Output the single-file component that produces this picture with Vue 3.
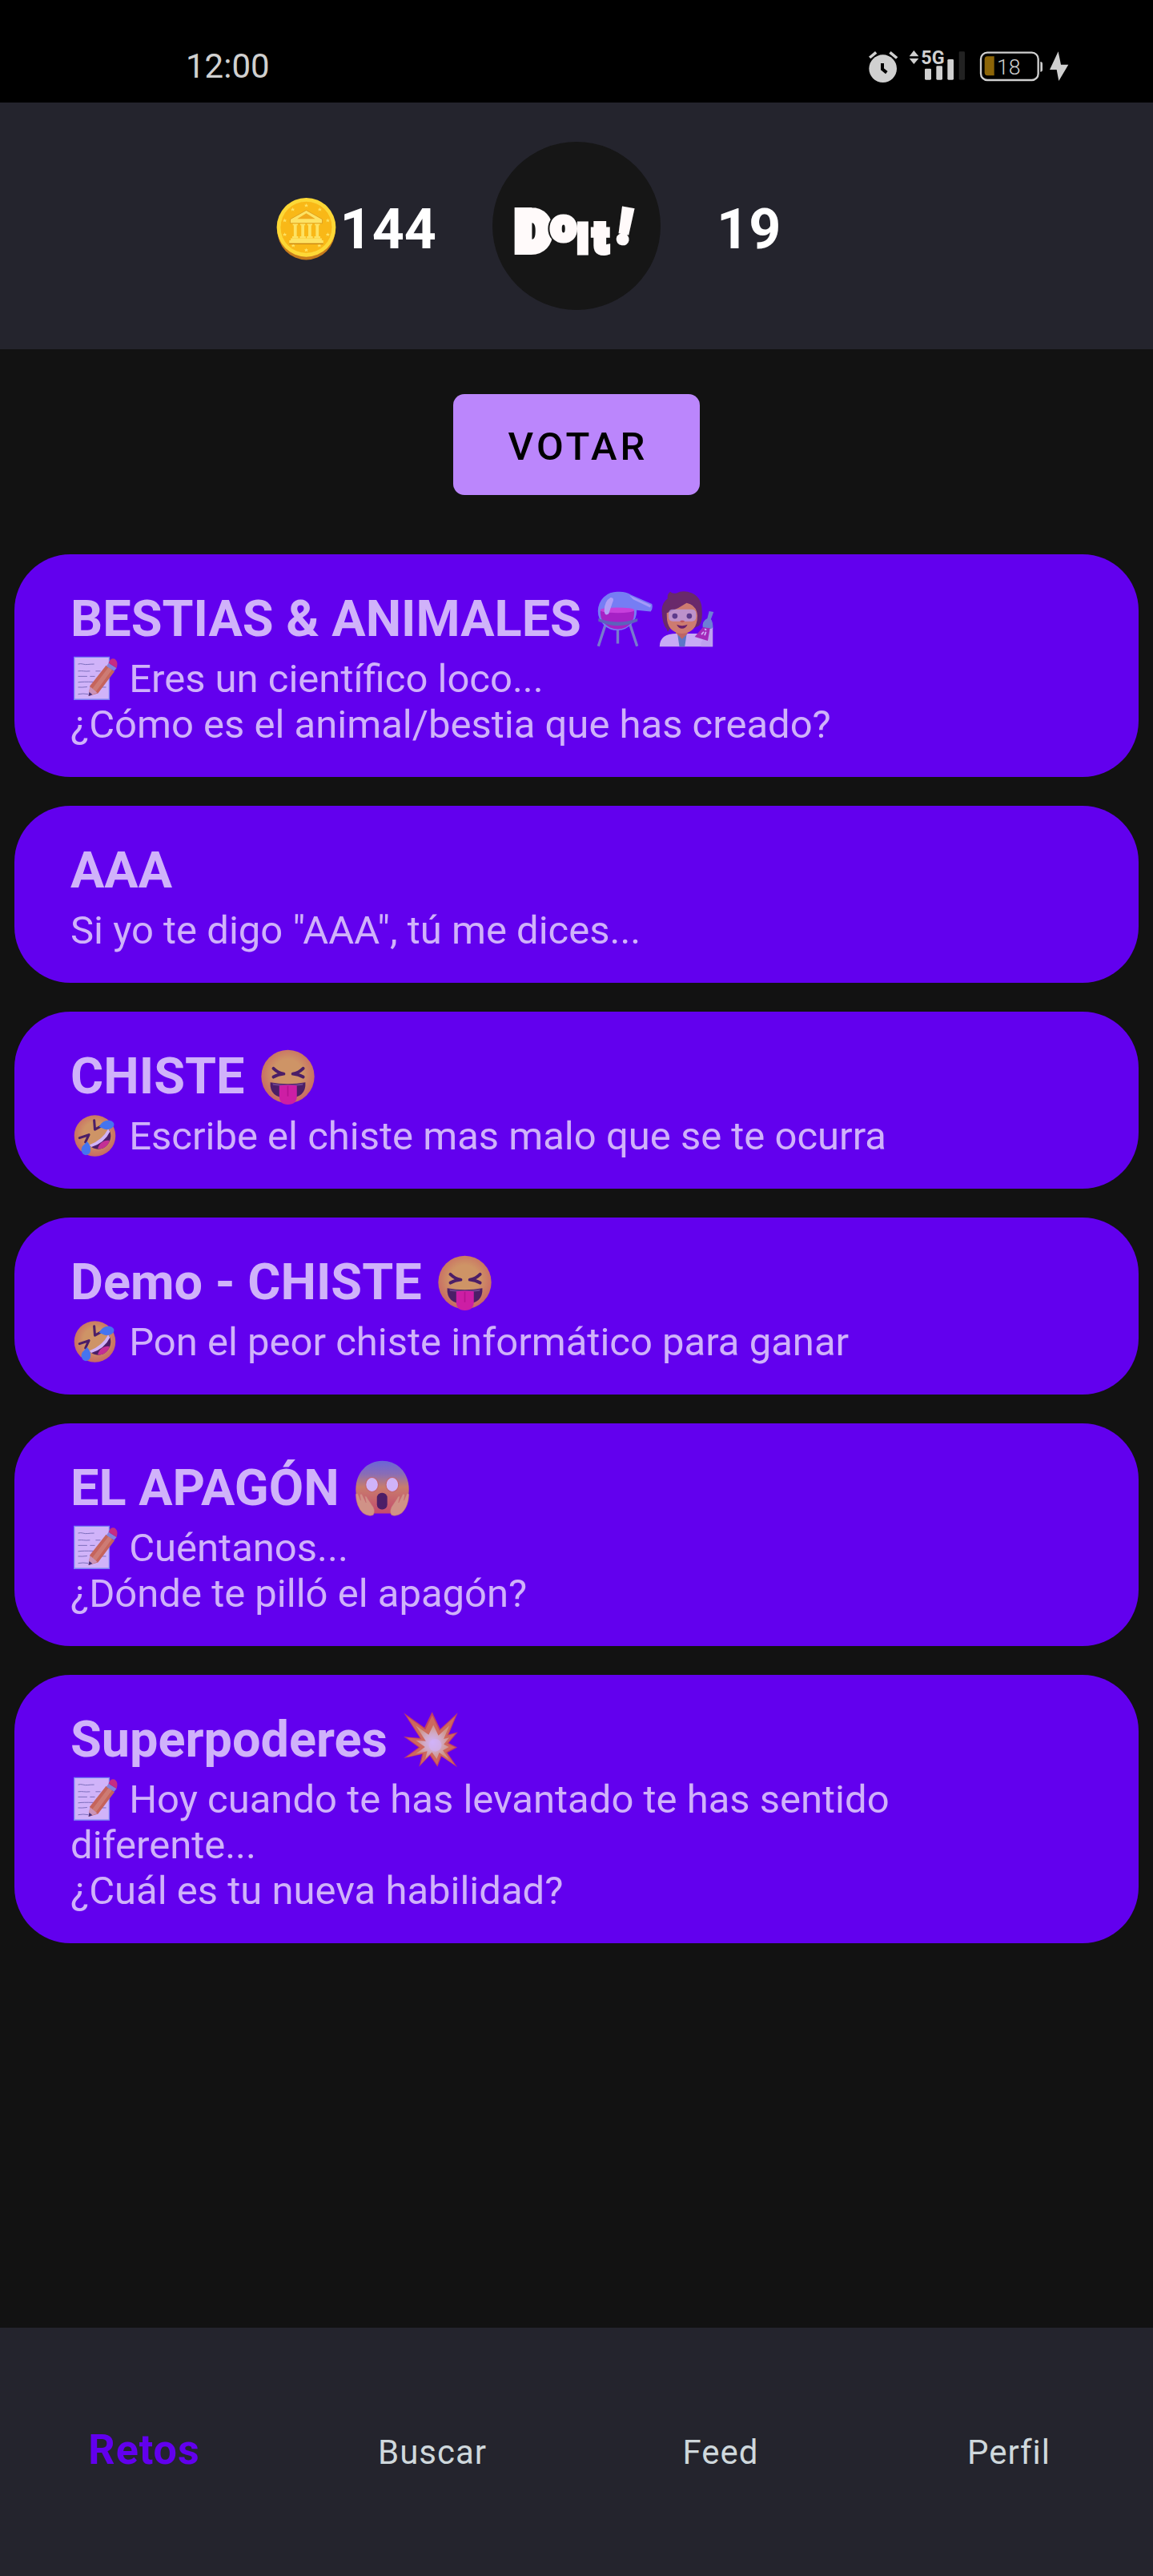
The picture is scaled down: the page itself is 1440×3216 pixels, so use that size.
<script setup>
import { ref } from 'vue'

const coins = 144
const level = 19

const challenges = [
  {
    title: 'BESTIAS & ANIMALES',
    icons: ['alembic', 'scientist'],
    lead: 'memo',
    lines: ['Eres un científico loco...', '¿Cómo es el animal/bestia que has creado?'],
  },
  { title: 'AAA', icons: [], lead: '', lines: ['Si yo te digo "AAA", tú me dices...'] },
  { title: 'CHISTE', icons: ['tongue'], lead: 'rofl', lines: ['Escribe el chiste mas malo que se te ocurra'] },
  { title: 'Demo - CHISTE', icons: ['tongue'], lead: 'rofl', lines: ['Pon el peor chiste informático para ganar'] },
  { title: 'EL APAGÓN', icons: ['scream'], lead: 'memo', lines: ['Cuéntanos...', '¿Dónde te pilló el apagón?'] },
  {
    title: 'Superpoderes',
    icons: ['boom'],
    lead: 'memo',
    lines: ['Hoy cuando te has levantado te has sentido diferente...', '¿Cuál es tu nueva habilidad?'],
  },
]

const tabs = ['Retos', 'Buscar', 'Feed', 'Perfil']
const active = ref('Retos')
</script>

<template>
  <div class="screen">
    <svg class="sprite" aria-hidden="true">
      <defs>
        <radialGradient id="skin" cx="50%" cy="45%" r="55%">
          <stop offset="0.5" stop-color="#fdd32d" />
          <stop offset="1" stop-color="#f3952a" />
        </radialGradient>
        <linearGradient id="fear" x1="0" y1="0" x2="0" y2="1">
          <stop offset="0" stop-color="#6f8fd0" />
          <stop offset="0.25" stop-color="#9a9ca0" />
          <stop offset="0.5" stop-color="#f3b236" />
          <stop offset="1" stop-color="#ee6a38" />
        </linearGradient>
        <radialGradient id="glow">
          <stop offset="0" stop-color="#ffffff" />
          <stop offset="0.5" stop-color="#fff3b8" />
          <stop offset="1" stop-color="#ffd45a" />
        </radialGradient>
        <path id="star" d="M0-4 1-1 4-1 2 1 3 4 0 2-3 4-2 1-4-1-1-1Z" />
        <path
          id="burst"
          d="M3 4 49 37 66 2 84 40 123 4 103 52 123 47 103 71 122 81 100 93 122 125 87 101 78 124 61 99 37 124 44 96 3 105 36 81 3 57 39 60Z"
        />
      </defs>

      <symbol id="e-coin" viewBox="-4 0 136 128">
        <ellipse cx="64" cy="67" rx="58" ry="60" fill="#c77b1c" />
        <circle cx="64" cy="62" r="59" fill="#fdd835" />
        <circle cx="64" cy="62" r="52" fill="#f9b817" stroke="#fbe04a" stroke-width="1" />
        <g fill="#fde263">
          <use href="#star" x="64" y="18" /><use href="#star" x="37" y="26" /><use href="#star" x="91" y="26" />
          <use href="#star" x="21" y="48" /><use href="#star" x="107" y="48" /><use href="#star" x="21" y="76" />
          <use href="#star" x="107" y="76" /><use href="#star" x="38" y="98" /><use href="#star" x="90" y="98" />
          <use href="#star" x="64" y="107" />
        </g>
        <path d="M64 28 96 46v8H32v-8Z" fill="#fde263" stroke="#d08a14" stroke-width="1" />
        <path d="M64 34 82 45H46Z" fill="#f0a91c" />
        <path
          d="M37 55h10v3h-2v22h3v4H36v-4h3V58h-2ZM52 55h10v3h-2v22h3v4H51v-4h3V58h-2ZM66 55h10v3h-2v22h3v4H65v-4h3V58h-2ZM81 55h10v3h-2v22h3v4H80v-4h3V58h-2Z"
          fill="#fde263"
        />
        <path d="M33 84h62v4h3v6H30v-6h3Z" fill="#fde263" />
        <path d="M30 94h68v2H30Z" fill="#c98512" />
      </symbol>

      <symbol id="e-memo" viewBox="-4 0 136 128">
        <path d="M5 3h100v121H5Z" fill="#fff" stroke="#7fb4f5" stroke-width="3" />
        <g stroke="#78909c" stroke-width="2" fill="none">
          <path d="M16 23q8-2 14 0t14 1 18-1M16 43q10-1 16 0t18 0M66 43h14M16 58h26M50 58h14M16 75q14-2 44-1M16 89q10 1 26-1M82 89h14M16 109q14-3 30 0" />
        </g>
        <path d="M96 27 120 44 73 106 46 114 50 85Z" fill="#ef8f1d" />
        <path d="M103 32 113 39 66 103 56 94Z" fill="#fbb041" />
        <path d="M50 87 71 105 46 114Z" fill="#f7d3a5" />
        <path d="M48 103 57 110 46 114Z" fill="#37474f" />
        <path d="M97 29 103 20 126 34 119 43Z" fill="#90b9d4" />
        <path d="M103 20Q108 4 120 8 132 16 126 34Z" fill="#ef4056" />
      </symbol>

      <symbol id="e-rofl" viewBox="-4 0 136 128">
        <circle cx="64" cy="64" r="59" fill="url(#skin)" />
        <path d="M104 46Q88 82 50 92C62 106 88 106 101 88 111 74 112 58 104 46Z" fill="#422b2f" />
        <path d="M72 101C76 84 92 74 106 78 101 94 88 102 72 101Z" fill="#ee4270" />
        <path d="M102 44Q86 76 48 90L54 96Q92 84 107 52Z" fill="#fff" />
        <g fill="none" stroke="#422b2f" stroke-width="7" stroke-linecap="round" stroke-linejoin="round">
          <path d="M62 20 64 46 84 35M20 70 47 61 37 82" />
        </g>
        <path d="M76 38Q86 18 106 20 122 24 118 36 110 48 92 45Z" fill="#3aa6f2" />
        <path d="M42 80Q56 96 50 112 42 124 30 116 22 106 28 94Z" fill="#3aa6f2" />
      </symbol>

      <symbol id="e-tongue" viewBox="-4 0 136 128">
        <circle cx="64" cy="64" r="59" fill="url(#skin)" />
        <g fill="none" stroke="#422b2f" stroke-width="7" stroke-linecap="round" stroke-linejoin="round">
          <path d="M32 46Q42 56 55 58 42 59 32 65M98 46Q88 56 75 58 88 59 98 65" />
        </g>
        <path d="M25 77Q64 84 103 77 105 112 64 112 23 112 25 77Z" fill="#422b2f" />
        <path d="M30 79Q64 85 98 79L97 83Q64 88 31 83Z" fill="#fff" opacity="0.25" />
        <path d="M45 84Q64 81 84 84V107Q84 126 64 126 45 126 45 107Z" fill="#fb2c85" />
        <path d="M64 85V108" stroke="#d81b6a" stroke-width="3" />
      </symbol>

      <symbol id="e-scream" viewBox="-4 0 136 128">
        <path d="M64 3C98 3 123 30 123 66 123 96 105 120 82 120H46C23 120 5 96 5 66 5 30 30 3 64 3Z" fill="url(#fear)" />
        <g fill="#fff" stroke="#eb8f39" stroke-width="2">
          <ellipse cx="41" cy="56" rx="14" ry="16" />
          <ellipse cx="86" cy="56" rx="14" ry="16" />
        </g>
        <rect x="52" y="74" width="23" height="37" rx="11" fill="#422b2f" />
        <g id="hand">
          <path
            d="M5 78Q8 72 11 79L16 91 14 78Q18 74 20 80L28 96 25 82Q29 80 31 86L40 100Q50 112 44 123 34 128 21 119 6 105 5 78Z"
            fill="#ffd05c"
            stroke="#f0993c"
            stroke-width="1"
          />
        </g>
        <use href="#hand" transform="translate(128 0) scale(-1 1)" />
      </symbol>

      <symbol id="e-boom" viewBox="-4 0 136 128">
        <use href="#burst" fill="#e8562e" />
        <use href="#burst" fill="#fb9420" transform="translate(7 8) scale(0.9)" />
        <use href="#burst" fill="url(#glow)" transform="translate(28 30) scale(0.62)" />
        <circle cx="73" cy="76" r="14" fill="#fff" opacity="0.6" />
      </symbol>

      <symbol id="e-alembic" viewBox="-4 0 136 128">
        <path d="M24 66 5 124M48 80V118M72 66 91 124" stroke="#82aec0" stroke-width="6" fill="none" />
        <path d="M48 3Q66 2 78 10L124 30Q127 40 121 47L90 44A43 43 0 1 1 48 3Z" fill="#7fb3f7" />
        <path d="M10 43H84Q88 70 66 82 48 90 30 82 6 70 10 43Z" fill="#c42fb4" />
        <ellipse cx="47" cy="44" rx="38" ry="6" fill="#f25bd5" />
        <path d="M5 62Q48 78 92 62V69Q48 88 5 69Z" fill="#5b8ca8" />
        <path d="M18 46Q18 24 32 16 42 16 36 28L28 52Q20 58 18 46Z" fill="#d3e2fd" />
        <path d="M74 11 122 33 120 38 82 20Z" fill="#c0dbff" />
      </symbol>

      <symbol id="e-scientist" viewBox="-4 0 136 128">
        <path
          d="M22 18Q20 8 28 3 32 8 42 6 56-2 76 6 98 16 98 44 100 66 92 78L80 84H28L22 92 20 86Q10 76 9 46 8 28 22 18Z"
          fill="#6d3b34"
        />
        <path d="M40 84H66V100L54 112 40 100Z" fill="#e48f2c" />
        <path d="M20 50Q44 42 64 28 86 32 88 56 88 94 54 96 20 94 20 56Z" fill="#fbb03b" />
        <path d="M4 125Q4 96 42 96L54 112 66 96H92L122 82V125Z" fill="#f3f3f8" />
        <path d="M44 98 54 108 64 98 60 125H48Z" fill="#5aa9b8" />
        <rect x="24" y="42" width="61" height="27" rx="9" fill="#dcdcea" opacity="0.75" />
        <circle cx="38" cy="57" r="6" fill="#5b5464" />
        <circle cx="70" cy="57" r="6" fill="#5b5464" />
        <path d="M49 68Q54 65 60 68 54 75 49 68Z" fill="#e27b22" />
        <path d="M42 76Q54 81 66 76 62 85 54 85 46 85 42 76Z" fill="#6d2f35" />
        <path d="M114 46 124 48 118 64Q124 72 122 86L100 82Q98 68 110 62Z" fill="#72b6cb" />
        <path d="M96 116Q106 96 122 82V125H96Z" fill="#e6e6f0" />
        <path d="M100 82 116 84 111 112 82 103Z" fill="#c13ba4" />
        <path d="M97 98 102 92M104 100 107 92M104 86 108 88" stroke="#fff" stroke-width="3" />
      </symbol>
    </svg>

    <div class="status">
      <time class="clock">12:00</time>
      <svg class="indicators" viewBox="70 38 756 180" role="img" aria-label="Alarma, 5G, batería 18 %">
        <g fill="#d0d0d0">
          <circle cx="129" cy="136" r="52" />
          <path d="M76 91 100 71 107 79 83 99ZM159 71 185 93 178 100 152 79Z" />
          <path d="M228 90 245 68 263 90ZM228 98H263L245 119Z" />
          <rect x="286" y="136" width="24" height="42" rx="4" />
          <rect x="329" y="126" width="23" height="52" rx="4" />
          <rect x="371" y="101" width="23" height="77" rx="4" />
          <path d="M719 110q8 0 8 8v22q0 8-8 8Z" />
          <path d="M786 72 754 140H780L788 182 824 121H796Z" />
        </g>
        <path d="M127 116V138L143 151" fill="none" stroke="#000" stroke-width="12" />
        <rect x="414" y="72" width="22" height="106" rx="4" fill="#222" />
        <rect x="496" y="76" width="215" height="103" rx="24" fill="none" stroke="#d0d0d0" stroke-width="7" />
        <path d="M546 90V162H520Q510 162 510 150V102Q510 90 520 90Z" fill="#8c6508" />
        <text class="net" x="272" y="119">5G</text>
        <text class="charge" x="556" y="157">18</text>
      </svg>
    </div>

    <header class="top">
      <div class="stat stat-left">
        <svg class="emoji emoji-l" role="img" aria-label="Monedas"><use href="#e-coin" /></svg>{{ coins }}
      </div>
      <svg class="logo" viewBox="0 0 210 212" role="img" aria-label="DoIt!">
        <circle cx="105" cy="106" r="105" fill="#161616" />
        <g class="mark">
          <text x="29" y="137" font-size="68" stroke-width="10">D</text>
          <text class="over" x="73" y="124" font-size="56" stroke-width="6">o</text>
          <text x="105" y="140" font-size="52" stroke-width="5">I</text>
          <text x="126" y="139" font-size="53" stroke-width="7">t</text>
          <text x="153" y="127" font-size="60" stroke-width="5" transform="rotate(10 160 129)">!</text>
        </g>
      </svg>
      <div class="stat">{{ level }}</div>
    </header>

    <main class="content">
      <button class="vote" type="button">VOTAR</button>
      <ul class="list">
        <li v-for="c in challenges" :key="c.title" class="card">
          <h2 class="title">
            {{ c.title }}
            <svg v-for="i in c.icons" :key="i" class="emoji emoji-m" aria-hidden="true"><use :href="'#e-' + i" /></svg>
          </h2>
          <p v-for="(line, n) in c.lines" :key="n" class="line">
            <svg v-if="n === 0 && c.lead" class="emoji emoji-s" aria-hidden="true"><use :href="'#e-' + c.lead" /></svg>
            {{ line }}
          </p>
        </li>
      </ul>
    </main>

    <nav class="tabs">
      <a
        v-for="t in tabs"
        :key="t"
        href="#"
        class="tab"
        :class="{ active: t === active }"
        @click.prevent="active = t"
      >{{ t }}</a>
    </nav>
  </div>
</template>

<style>
body {
  margin: 0;
  background: #121212;
}
</style>

<style scoped>
.screen {
  display: flex;
  flex-direction: column;
  min-height: 100vh;
  background: #121212;
  font-family: Roboto, "Liberation Sans", sans-serif;
}
.sprite {
  position: absolute;
  width: 0;
  height: 0;
}
.status {
  display: flex;
  justify-content: space-between;
  align-items: center;
  box-sizing: border-box;
  height: 128px;
  padding: 38px 105px 0 232px;
  background: #000;
}
.clock {
  color: #d0d0d0;
  font-size: 42px;
  line-height: 50px;
}
.indicators {
  width: 252px;
  height: 60px;
}
.net {
  fill: #d0d0d0;
  font-size: 70px;
  font-weight: 700;
}
.charge {
  fill: #d0d0d0;
  font-size: 80px;
  font-weight: 300;
}
.top {
  display: grid;
  grid-template-columns: 1fr auto 1fr;
  column-gap: 70px;
  align-items: center;
  padding: 48px 0;
  background: #24242d;
}
.stat {
  padding-top: 8px;
  color: #fff;
  font-size: 70px;
  font-weight: 700;
  line-height: 82px;
}
.stat-left {
  text-align: right;
}
.logo {
  width: 210px;
  height: 212px;
}
.mark {
  fill: #fffafa;
  stroke: #fffafa;
  font-weight: 900;
}
.over {
  filter: drop-shadow(-2px 0 0 #161616);
}
.emoji {
  display: inline-block;
}
.emoji-l {
  width: 85px;
  height: 80px;
  vertical-align: -15px;
}
.emoji-m {
  width: 77px;
  height: 72px;
  vertical-align: -15px;
  opacity: 0.7;
}
.emoji-s {
  width: 61px;
  height: 56px;
  vertical-align: -11px;
  opacity: 0.7;
}
.content {
  display: flex;
  flex-direction: column;
  align-items: center;
  padding: 56px 18px;
}
.vote {
  min-width: 308px;
  height: 126px;
  padding: 4px 60px 0 64px;
  border: 0;
  border-radius: 14px;
  background: #bb86fc;
  color: #000;
  font-family: inherit;
  font-size: 49px;
  font-weight: 500;
  letter-spacing: 4px;
}
.list {
  display: flex;
  flex-direction: column;
  gap: 36px;
  align-self: stretch;
  margin: 74px 0 0;
  padding: 0;
  list-style: none;
}
.card {
  padding: 44px 88px 37px 70px;
  border-radius: 70px;
  background: #6200ee;
  color: #d0b2fa;
}
.title {
  margin: 0 0 9px;
  font-size: 63px;
  font-weight: 700;
  line-height: 74px;
}
.line {
  margin: 0;
  font-size: 49px;
  line-height: 57px;
}
.tabs {
  display: flex;
  align-items: baseline;
  box-sizing: border-box;
  min-height: 310px;
  margin-top: auto;
  padding: 122px 0;
  background: #24242d;
}
.tab {
  flex: 1;
  color: #cfd8dc;
  font-size: 42px;
  line-height: 62px;
  letter-spacing: 1px;
  text-align: center;
  text-decoration: none;
}
.tab.active {
  color: #6200ee;
  font-size: 52px;
  font-weight: 700;
}
</style>
